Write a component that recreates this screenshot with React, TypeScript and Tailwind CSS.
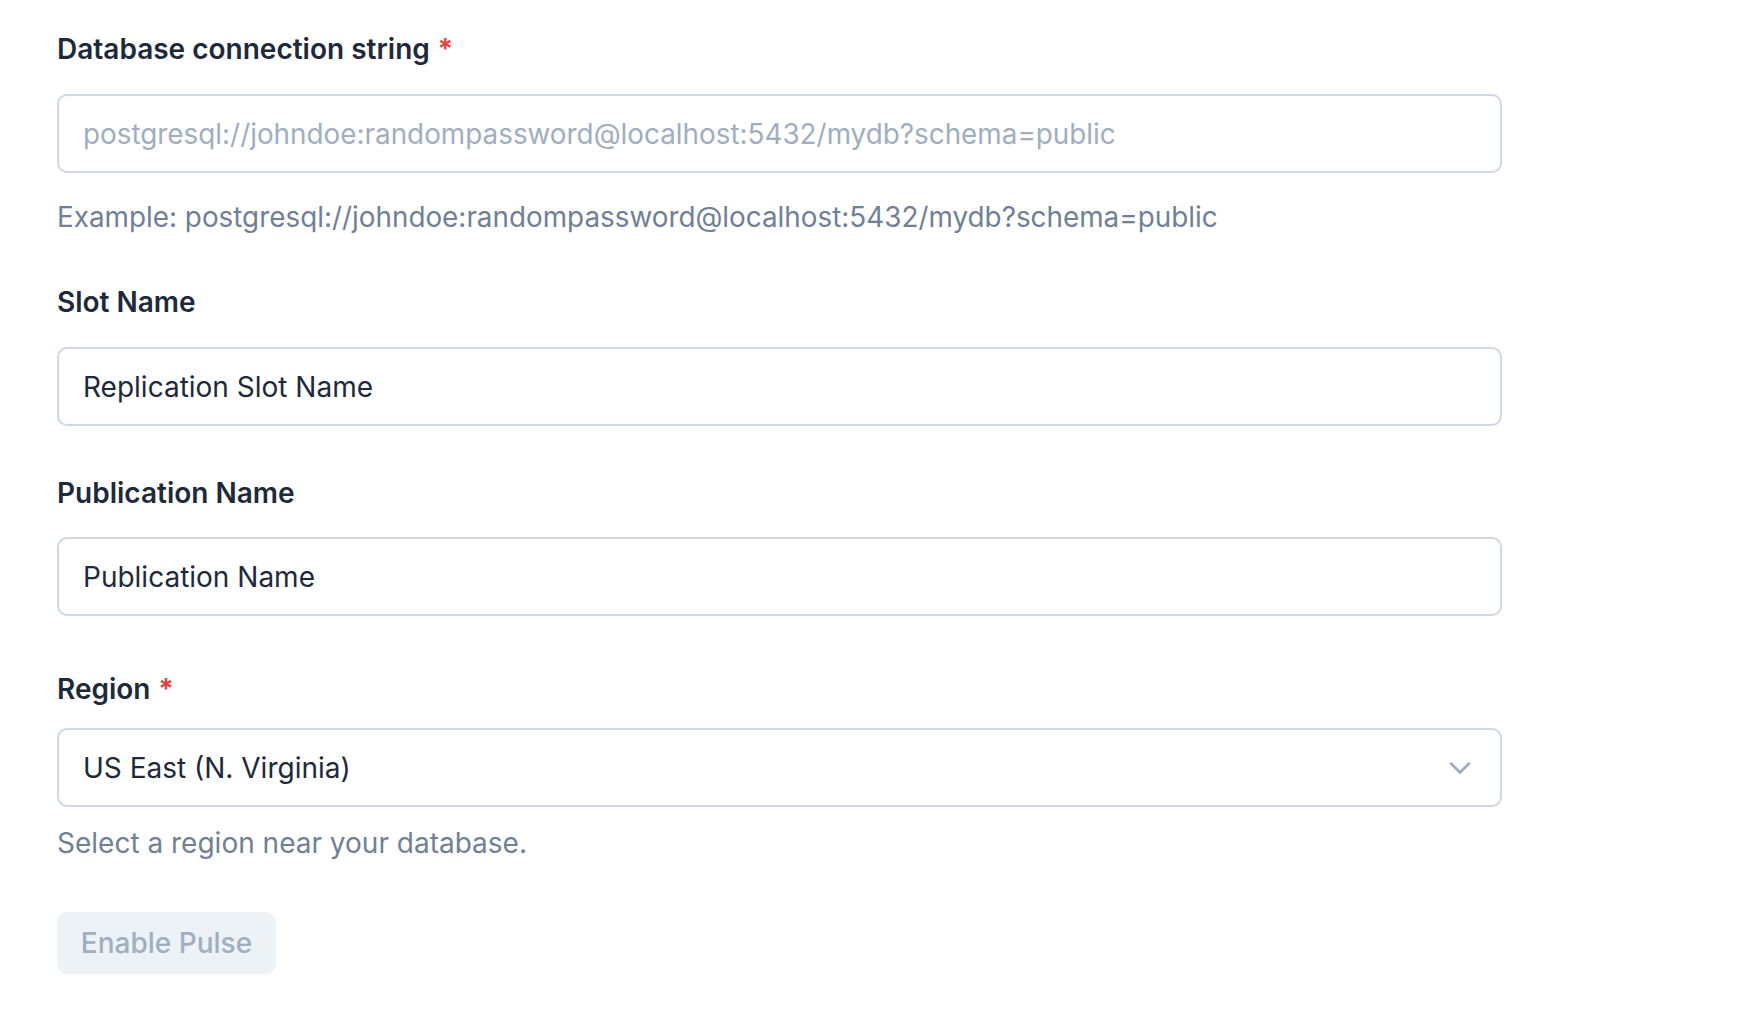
import React from "react";
import { ChevronDown } from "lucide-react";

function Label({ text, required, className }: { text: string; required?: boolean; className?: string }) {
  return (
    <label className={`block text-[28px] leading-[42px] font-semibold text-[#1e293b] ${className ?? ""}`}>
      {text}
      {required && <span className="ml-[8px] text-[#e53e3e]">*</span>}
    </label>
  );
}

export default function App() {
  return (
    <div
      className="min-h-screen bg-white pt-[28px] pl-[57px]"
      style={{ fontFamily: "Inter, 'Noto Sans', sans-serif" }}
    >
      <div className="w-[1445px]">
        <Label text="Database connection string" required />
        <input
          readOnly
          placeholder="postgresql://johndoe:randompassword@localhost:5432/mydb?schema=public"
          className="mt-[24px] block h-[79px] w-full rounded-[10px] border-2 border-[#cfd8e3] bg-white px-[24px] text-[27.85px] text-[#1e293b] placeholder:text-[#a0aec0] outline-none"
        />
        <p className="mt-[23px] text-[27.85px] leading-[42px] text-[#718096]">
          Example: postgresql://johndoe:randompassword@localhost:5432/mydb?schema=public
        </p>

        <Label text="Slot Name" className="mt-[43px]" />
        <input
          readOnly
          defaultValue="Replication Slot Name"
          className="mt-[24px] block h-[79px] w-full rounded-[10px] border-2 border-[#cfd8e3] bg-white px-[24px] text-[28px] text-[#1e293b] outline-none"
        />

        <Label text="Publication Name" className="mt-[46px]" />
        <input
          readOnly
          defaultValue="Publication Name"
          className="mt-[23px] block h-[79px] w-full rounded-[10px] border-2 border-[#cfd8e3] bg-white px-[24px] text-[28px] text-[#1e293b] outline-none"
        />

        <Label text="Region" required className="mt-[52px]" />
        <div className="mt-[18px] flex h-[79px] w-full items-center justify-between rounded-[10px] border-2 border-[#cfd8e3] bg-white pl-[24px] pr-[22px]">
          <span className="text-[28px] text-[#1e293b]">US East (N. Virginia)</span>
          <ChevronDown size={36} strokeWidth={1.9} className="text-[#a0aec0]" />
        </div>
        <p className="mt-[15px] text-[28px] leading-[42px] text-[#718096]">Select a region near your database.</p>

        <button
          disabled
          className="mt-[48px] flex h-[62px] w-[219px] items-center justify-center rounded-[10px] bg-[#edf2f7] text-[28px] font-medium text-[#a0aec0]"
        >
          Enable Pulse
        </button>
      </div>
    </div>
  );
}
